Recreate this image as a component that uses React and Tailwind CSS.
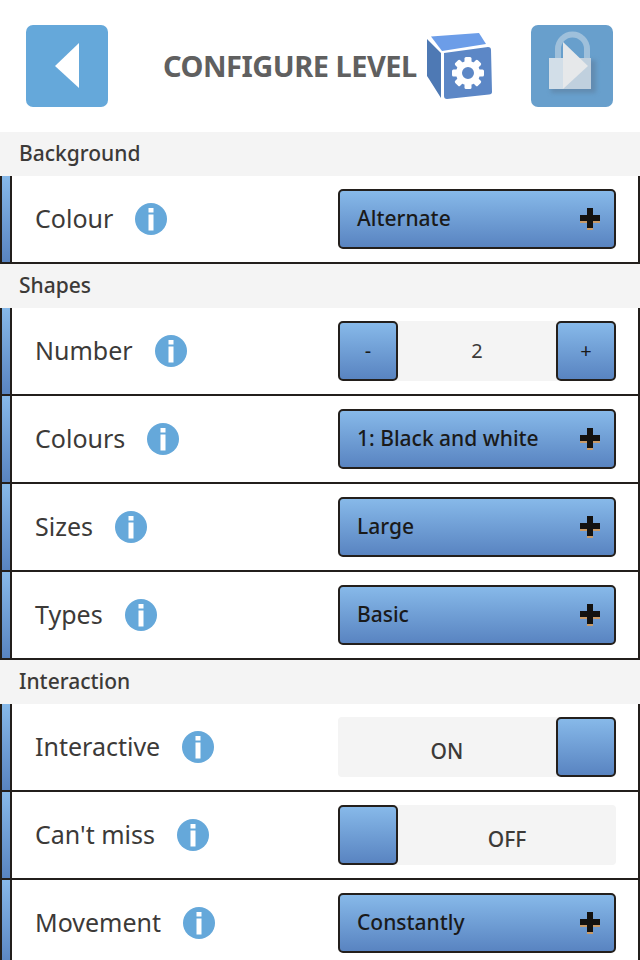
import React from 'react';

const font = { fontFamily: '"Noto Sans", "Open Sans", sans-serif' };

const blue = 'bg-gradient-to-b from-[#87b9e9] to-[#5984c1]';

const InfoIcon = () => (
  <svg width="32" height="32" viewBox="0 0 32 32" className="shrink-0">
    <circle cx="16" cy="16" r="16" fill="#65a8da" />
    <rect x="13.5" y="5" width="5" height="4.5" fill="#fff" />
    <rect x="13.5" y="11.5" width="5" height="16" fill="#fff" />
  </svg>
);

const PlusIcon = () => (
  <svg width="20" height="22" viewBox="0 0 20 22" className="shrink-0">
    <path d="M7 2h6v20H7zM0 7h20v8H0z" fill="#c89a68" />
    <path d="M7 0h6v7h7v6h-7v7H7v-7H0V7h7z" fill="#141210" />
  </svg>
);

const CubeIcon = () => {
  const teeth = [0, 45, 90, 135, 180, 225, 270, 315];
  return (
    <svg width="65" height="68" viewBox="0 0 65 68" className="shrink-0">
      <path d="M4 4.5 52 1l7 11-44 7z" fill="#6c9de8" />
      <path d="M0 7l14 14v45L2 47 0 44z" fill="#4e79b4" />
      <path d="M17 21 61 15q3 0 3 3l1 42q0 2-3 2.5L20 67q-3 0-3-3z" fill="#5c87c6" />
      <g transform="translate(41 41)" fill="#fff">
        {teeth.map((a) => (
          <rect key={a} x="-3.5" y="-16" width="7" height="8" rx="1.5" transform={`rotate(${a})`} />
        ))}
        <path fillRule="evenodd" d="M0-12a12 12 0 1 0 0 24 12 12 0 1 0 0-24zM0-6a6 6 0 1 1 0 12A6 6 0 1 1 0-6z" />
      </g>
    </svg>
  );
};

const LockIcon = () => (
  <svg width="82" height="82" viewBox="0 0 82 82">
    <defs>
      <filter id="soft" x="-30%" y="-30%" width="160%" height="160%">
        <feGaussianBlur stdDeviation="2" />
      </filter>
    </defs>
    <rect x="20" y="35" width="45" height="33" fill="#5d7f9f" opacity="0.6" filter="url(#soft)" />
    <path d="M27 34V24a14.500 14.500 0 0 1 29 0v10" fill="none" stroke="#9fc0db" strokeWidth="6" />
    <rect x="18" y="33" width="42" height="31" fill="#c0d0de" />
    <path d="M18 33h14v31H18z" fill="#d2dee8" />
    <path d="M32 17 57 41 32 64z" fill="#e6e8ea" />
  </svg>
);

const Dropdown = ({ value }) => (
  <div className={`flex h-[60px] w-[278px] items-center justify-between rounded-[5px] border-2 border-[#231f1c] pl-[17px] pr-[14px] ${blue}`}>
    <span className="text-[21px] font-medium text-[#1a1a1a]">{value}</span>
    <PlusIcon />
  </div>
);

const SquareButton = ({ children }) => (
  <div className={`flex h-[60px] w-[60px] shrink-0 items-center justify-center rounded-[5px] border-2 border-[#231f1c] text-[20px] text-[#1a1a1a] ${blue}`}>
    {children}
  </div>
);

const Stepper = ({ value }) => (
  <div className="flex h-[60px] w-[278px] items-center rounded-[4px] bg-[#f4f4f4]">
    <SquareButton>-</SquareButton>
    <span className="flex-1 text-center text-[20px] text-[#3c3a38]">{value}</span>
    <SquareButton>+</SquareButton>
  </div>
);

const Toggle = ({ on }) => (
  <div className="flex h-[60px] w-[278px] items-center rounded-[4px] bg-[#f4f4f4]">
    {!on && <SquareButton />}
    <span className="flex-1 pt-[10px] text-center text-[21px] font-medium text-[#3c3a38]">{on ? 'ON' : 'OFF'}</span>
    {on && <SquareButton />}
  </div>
);

const Row = ({ label, children }) => (
  <div className="flex h-[88px] border-b-2 border-r-2 border-[#231f1c]">
    <div className="w-3 shrink-0 border-x-2 border-[#231f1c] bg-gradient-to-b from-[#87b9e9] to-[#5984c1]" />
    <div className="flex flex-1 items-center justify-between pr-[22px] pl-[23px]">
      <div className="flex items-center gap-[22px]">
        <span className="text-[25px] text-[#3c3a38]">{label}</span>
        <InfoIcon />
      </div>
      {children}
    </div>
  </div>
);

const Section = ({ title }) => (
  <div className="flex h-[44px] items-center bg-[#f4f4f4] pl-[19px] text-[21px] font-medium text-[#3c3a38]">
    {title}
  </div>
);

export default function App() {
  return (
    <div className="h-[960px] w-[640px] overflow-hidden bg-white" style={font}>
      <header className="flex h-[132px] items-center pl-[26px] pr-[27px]">
        <div className="flex h-[82px] w-[82px] items-center justify-center rounded-[7px] bg-[#65a8da]">
          <svg width="26" height="46" viewBox="0 0 26 46">
            <path d="M25 0v45L1 23z" fill="#fff" />
          </svg>
        </div>
        <div className="ml-[55px] flex items-center gap-[10px]">
          <h1 className="text-[29px] font-bold tracking-[-0.5px] text-[#606060]">CONFIGURE LEVEL</h1>
          <CubeIcon />
        </div>
        <div className="ml-auto h-[82px] w-[82px] rounded-[7px] bg-[#689fcc]">
          <LockIcon />
        </div>
      </header>

      <Section title="Background" />
      <Row label="Colour"><Dropdown value="Alternate" /></Row>

      <Section title="Shapes" />
      <Row label="Number"><Stepper value="2" /></Row>
      <Row label="Colours"><Dropdown value="1: Black and white" /></Row>
      <Row label="Sizes"><Dropdown value="Large" /></Row>
      <Row label="Types"><Dropdown value="Basic" /></Row>

      <Section title="Interaction" />
      <Row label="Interactive"><Toggle on /></Row>
      <Row label="Can't miss"><Toggle on={false} /></Row>
      <Row label="Movement"><Dropdown value="Constantly" /></Row>
    </div>
  );
}
